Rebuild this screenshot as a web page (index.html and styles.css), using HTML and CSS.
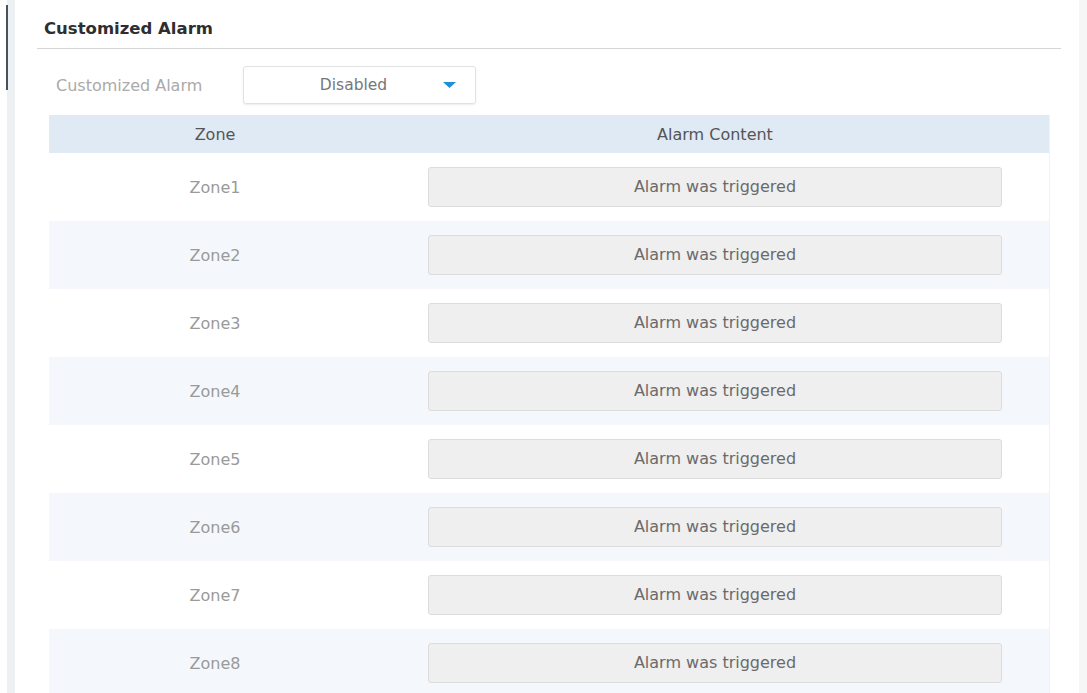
FILE: index.html
```html
<!DOCTYPE html>
<html lang="en">
<head>
    <meta charset="UTF-8">
    <meta name="viewport" content="width=device-width, initial-scale=1.0">
    <title>Customized Alarm</title>
    <link rel="stylesheet" href="styles.css">
</head>
<body>

<div class="page">
    <div class="rail">
        <div class="rail-mark"></div>
    </div>

    <div class="content">
        <h3 class="section-title">Customized Alarm</h3>

        <div class="field">
            <label class="field-label">Customized Alarm</label>
            <div class="select">
                <span class="select-value">Disabled</span>
                <svg class="select-arrow" width="13" height="6" viewBox="0 0 13 6">
                    <path d="M0 0 L13 0 L6.5 6 Z" fill="#1f8fd6"/>
                </svg>
            </div>
        </div>

        <table class="zones">
            <tr>
                <th class="col-zone">Zone</th>
                <th>Alarm Content</th>
            </tr>
            <tr>
                <td>Zone1</td>
                <td><div class="alarm-input">Alarm was triggered</div></td>
            </tr>
            <tr>
                <td>Zone2</td>
                <td><div class="alarm-input">Alarm was triggered</div></td>
            </tr>
            <tr>
                <td>Zone3</td>
                <td><div class="alarm-input">Alarm was triggered</div></td>
            </tr>
            <tr>
                <td>Zone4</td>
                <td><div class="alarm-input">Alarm was triggered</div></td>
            </tr>
            <tr>
                <td>Zone5</td>
                <td><div class="alarm-input">Alarm was triggered</div></td>
            </tr>
            <tr>
                <td>Zone6</td>
                <td><div class="alarm-input">Alarm was triggered</div></td>
            </tr>
            <tr>
                <td>Zone7</td>
                <td><div class="alarm-input">Alarm was triggered</div></td>
            </tr>
            <tr>
                <td>Zone8</td>
                <td><div class="alarm-input">Alarm was triggered</div></td>
            </tr>
        </table>
    </div>

    <div class="edge"></div>
</div>

</body>
</html>
```

FILE: styles.css
```css
body {
    margin: 0;
    padding: 0;
    font-family: "DejaVu Sans", Verdana, sans-serif;
    background-color: #fff;
    overflow: hidden;
}

.page {
    display: flex;
    height: 693px;
}

.rail {
    width: 8px;
    margin-left: 7px;
    background-color: #eef1f3;
}

.rail-mark {
    width: 2px;
    height: 85px;
    margin-top: 5px;
    margin-left: -1px;
    background-color: #46525e;
}

.content {
    width: 1024px;
    margin-left: 22px;
}

.section-title {
    margin: 0;
    padding: 19px 0 9px 7px;
    font-size: 16.5px;
    line-height: 20px;
    color: #2e2e2e;
    border-bottom: 1px solid #d6d6d6;
}

.field {
    display: flex;
    align-items: center;
    margin-top: 17px;
    padding-left: 19px;
}

.field-label {
    width: 187px;
    font-size: 16px;
    color: #aaa;
}

.select {
    display: flex;
    align-items: center;
    width: 231px;
    height: 36px;
    border: 1px solid #e2e2e2;
    border-radius: 3px;
    box-shadow: 0 1px 2px rgba(0, 0, 0, 0.08);
}

.select-value {
    flex: 1;
    padding-left: 50px;
    text-align: center;
    font-size: 15.5px;
    color: #777;
}

.select-arrow {
    margin: 0 19px 0 30px;
}

.zones {
    width: 1001px;
    margin: 11px 0 0 12px;
    border-collapse: collapse;
    border-right: 1px solid #f0f2f4;
}

.zones th {
    height: 38px;
    padding: 0;
    font-weight: normal;
    font-size: 16px;
    color: #555;
    background-color: #dfeaf4;
}

.zones .col-zone {
    width: 332px;
}

.zones td {
    height: 68px;
    padding: 0;
    text-align: center;
    font-size: 16px;
    color: #9a9a9a;
}

.zones tr:nth-child(odd) td {
    background-color: #f4f8fc;
}

.alarm-input {
    width: 572px;
    height: 38px;
    margin-left: 47px;
    line-height: 38px;
    text-align: center;
    font-size: 16px;
    color: #6a6a6a;
    background-color: #efefef;
    border: 1px solid #dcdcdc;
    border-radius: 3px;
}

.edge {
    width: 8px;
    margin-left: 18px;
    background-color: #f6f6f6;
}
```
